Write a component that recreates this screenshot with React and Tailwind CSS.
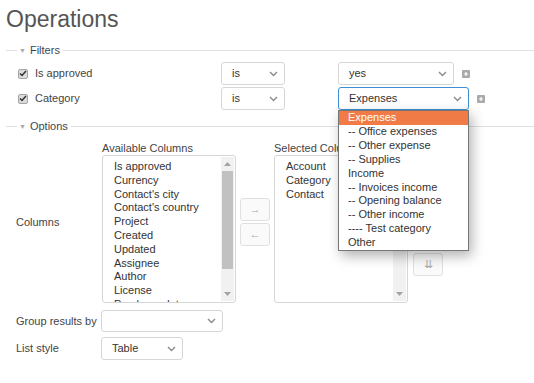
import React from 'react';

const FONT = { fontFamily: '"Liberation Sans", Arial, sans-serif' };

function Chevron({ className = '' }) {
  return (
    <svg width="9" height="6" viewBox="0 0 9 6" className={className}>
      <path d="M1 1l3.5 3.5L8 1" fill="none" stroke="#8a8a8a" strokeWidth="1.4" />
    </svg>
  );
}

function Select({ value, w, h = 'h-[23px]', focused }) {
  return (
    <div
      className={`${w} ${h} flex items-center justify-between pl-[10px] pr-[6px] bg-white rounded-[3px] border ${
        focused ? 'border-[#3d8fd1]' : 'border-[#d6d6d6]'
      } text-[11px] text-[#333]`}
    >
      <span>{value}</span>
      <Chevron />
    </div>
  );
}

function Legend({ label }) {
  return (
    <div className="flex items-center h-[14px]">
      <div className="w-[11px] h-px bg-[#e0e0e0] ml-[6px]" />
      <span className="ml-[2px] text-[#a8a8a8] text-[7px] leading-none">▼</span>
      <span className="ml-[4px] text-[11px] text-[#3d4750]">{label}</span>
      <div className="flex-1 h-px bg-[#e0e0e0] ml-[3px]" />
    </div>
  );
}

function Check() {
  return (
    <div className="w-[10px] h-[10px] rounded-[2px] bg-[#dcdcdc] border border-[#a5a5a5] flex items-center justify-center">
      <svg width="8" height="7" viewBox="0 0 8 7">
        <path d="M1 3.5l2 2L7 1" fill="none" stroke="#333" strokeWidth="1.5" />
      </svg>
    </div>
  );
}

function Plus() {
  return (
    <div className="w-[8px] h-[8px] rounded-[1px] bg-[#aaa] flex items-center justify-center">
      <svg width="6" height="6" viewBox="0 0 6 6">
        <path d="M3 1v4M1 3h4" stroke="#fff" strokeWidth="1.2" />
      </svg>
    </div>
  );
}

function Scrollbar({ thumb }) {
  return (
    <div className="w-[13px] h-full bg-[#f1f1f1] flex flex-col items-center">
      <div className="h-[14px] flex items-center justify-center">
        {thumb && <svg width="7" height="4" viewBox="0 0 7 4"><path d="M0 4L3.5 0L7 4z" fill="#a3a3a3" /></svg>}
      </div>
      <div className="flex-1 w-full px-[1px]">
        {thumb && <div className="h-[98px] bg-[#c1c1c1]" />}
      </div>
      <div className="h-[14px] flex items-center justify-center">
        <svg width="7" height="4" viewBox="0 0 7 4"><path d="M0 0L3.5 4L7 0z" fill="#a3a3a3" /></svg>
      </div>
    </div>
  );
}

function ListBox({ items, thumb }) {
  return (
    <div className="w-[134px] h-[148px] border border-[#d6d6d6] rounded-[3px] bg-white flex overflow-hidden">
      <div className="flex-1 pt-[4px] pl-[11px] text-[11px] leading-[13.8px] text-[#333] overflow-hidden">
        {items.map((it) => (
          <div key={it} className="whitespace-nowrap">{it}</div>
        ))}
      </div>
      <div className="py-px pr-px h-full">
        <Scrollbar thumb={thumb} />
      </div>
    </div>
  );
}

function MoveBtn({ label }) {
  return (
    <div className="w-[30px] h-[23px] rounded-[3px] border border-[#e0e0e0] bg-[#fafafa] flex items-center justify-center text-[11px] text-[#aaa]">
      {label}
    </div>
  );
}

const available = [
  'Is approved', 'Currency', "Contact's city", "Contact's country", 'Project', 'Created',
  'Updated', 'Assignee', 'Author', 'License', 'Purchase date',
];

const categories = [
  'Expenses', '-- Office expenses', '-- Other expense', '-- Supplies', 'Income',
  '-- Invoices income', '-- Opening balance', '-- Other income', '---- Test category', 'Other',
];

export default function App() {
  return (
    <div className="w-[534px] h-[383px] overflow-hidden bg-white text-[11px] text-[#333]" style={FONT}>
      <h2 className="pt-[6px] pl-[6px] text-[23px] leading-[26px] text-[#555]">Operations</h2>

      <div className="mt-[11px]">
        <Legend label="Filters" />
      </div>

      {/* Filters */}
      <div className="mt-[5px] flex items-center h-[23px]">
        <div className="w-[221px] flex items-center pl-[18px]">
          <Check />
          <span className="ml-[7px] text-[#444]">Is approved</span>
        </div>
        <Select value="is" w="w-[64px]" />
        <div className="ml-[53px]">
          <Select value="yes" w="w-[116px]" />
        </div>
        <div className="ml-[8px]"><Plus /></div>
      </div>
      <div className="mt-[2px] flex items-center h-[23px]">
        <div className="w-[221px] flex items-center pl-[18px]">
          <Check />
          <span className="ml-[7px] text-[#444]">Category</span>
        </div>
        <Select value="is" w="w-[64px]" />
        <div className="ml-[53px] relative z-10">
          <Select value="Expenses" w="w-[131px]" focused />
          <div className="absolute left-0 top-[23px] w-[131px] bg-white border border-[#767676] shadow-[3px_5px_12px_rgba(0,0,0,0.3)] text-[11px] leading-[13.9px] text-[#333]">
            {categories.map((c, i) => (
              <div
                key={c}
                className={`pl-[9px] whitespace-nowrap ${i === 0 ? 'bg-[#f07b47] text-white' : ''}`}
              >
                {c}
              </div>
            ))}
          </div>
        </div>
        <div className="ml-[8px]"><Plus /></div>
      </div>

      <div className="mt-[9px]">
        <Legend label="Options" />
      </div>

      {/* Columns */}
      <div className="mt-[8px] flex items-center">
        <div className="w-[102px] pl-[16px] text-[#444]">Columns</div>
        <div>
          <div className="leading-[14px] h-[14px] text-[#444]">Available Columns</div>
          <ListBox items={available} thumb />
        </div>
        <div className="ml-[4px] flex flex-col gap-[2px]">
          <MoveBtn label="→" />
          <MoveBtn label="←" />
        </div>
        <div className="ml-[4px]">
          <div className="leading-[14px] h-[14px] text-[#444]">Selected Columns</div>
          <ListBox items={['Account', 'Category', 'Contact']} />
        </div>
        <div className="ml-[5px] flex flex-col gap-[2px] pt-[10px]">
          <MoveBtn label="⇈" />
          <MoveBtn label="↑" />
          <MoveBtn label="↓" />
          <MoveBtn label="⇊" />
        </div>
      </div>

      <div className="mt-[7px] flex items-center">
        <div className="w-[101px] pl-[16px] text-[#444]">Group results by</div>
        <Select value="" w="w-[122px]" h="h-[22px]" />
      </div>
      <div className="mt-[5px] flex items-center">
        <div className="w-[101px] pl-[16px] text-[#444]">List style</div>
        <Select value="Table" w="w-[82px]" />
      </div>
    </div>
  );
}
